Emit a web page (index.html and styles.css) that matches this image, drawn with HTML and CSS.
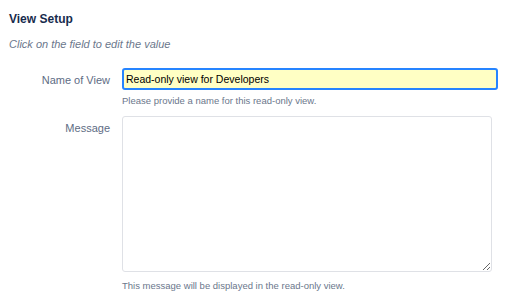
FILE: index.html
```html
<!DOCTYPE html>
<html lang="en"><head>
    <meta charset="UTF-8">
    <meta name="viewport" content="width=device-width, initial-scale=1.0">
    <title>View Setup</title>
    <link rel="stylesheet" href="styles.css">
</head>
<body>
    <div class="setup">
        <h2 class="setup-title">View Setup</h2>
        <p class="setup-hint">Click on the field to edit the value</p>
        <div class="field-row">
            <label class="field-label" for="view-name">Name of View</label>
            <div class="field-body">
                <input id="view-name" class="text-input" type="text" value="Read-only view for Developers">
                <div class="field-help">Please provide a name for this read-only view.</div>
            </div>
        </div>
        <div class="field-row">
            <label class="field-label" for="view-message">Message</label>
            <div class="field-body">
                <textarea id="view-message" class="text-area"></textarea>
                <div class="field-help">This message will be displayed in the read-only view.</div>
            </div>
        </div>
    </div>
</body>
</html>
```

FILE: styles.css
```css
body {
    font-family: "Liberation Sans", Arial, sans-serif;
    background-color: #fff;
    color: #172b4d;
    margin: 0;
}
.setup {
    padding: 11px 16px 0 9px;
}
.setup-title {
    font-size: 12px;
    font-weight: bold;
    color: #172b4d;
    margin: 0;
    line-height: 16px;
}
.setup-hint {
    font-size: 11px;
    font-style: italic;
    color: #6b778c;
    margin: 10px 0 0;
    line-height: 14px;
}
.field-row {
    display: grid;
    grid-template-columns: 101px 1fr;
    column-gap: 12px;
    margin-top: 17px;
}
.field-row + .field-row {
    margin-top: 9px;
}
.field-label {
    text-align: right;
    font-size: 11px;
    line-height: 14px;
    color: #5e6c84;
    padding-top: 5px;
}
.field-body {
    display: flex;
    flex-direction: column;
}
.text-input {
    box-sizing: border-box;
    width: 376px;
    height: 22px;
    padding: 0 2px;
    font-family: "Liberation Sans", Arial, sans-serif;
    font-size: 10.5px;
    color: #000;
    background: #ffffc4;
    border: 2px solid #2684ff;
    border-radius: 3px;
    outline: none;
}
.text-area {
    box-sizing: border-box;
    width: 370px;
    height: 156px;
    margin: 0;
    border: 1px solid #dfe1e6;
    border-radius: 3px;
    resize: vertical;
}
.field-help {
    font-size: 9.5px;
    color: #6b778c;
    margin-top: 5px;
    line-height: 12px;
}
.text-area + .field-help {
    margin-top: 8px;
}
```
